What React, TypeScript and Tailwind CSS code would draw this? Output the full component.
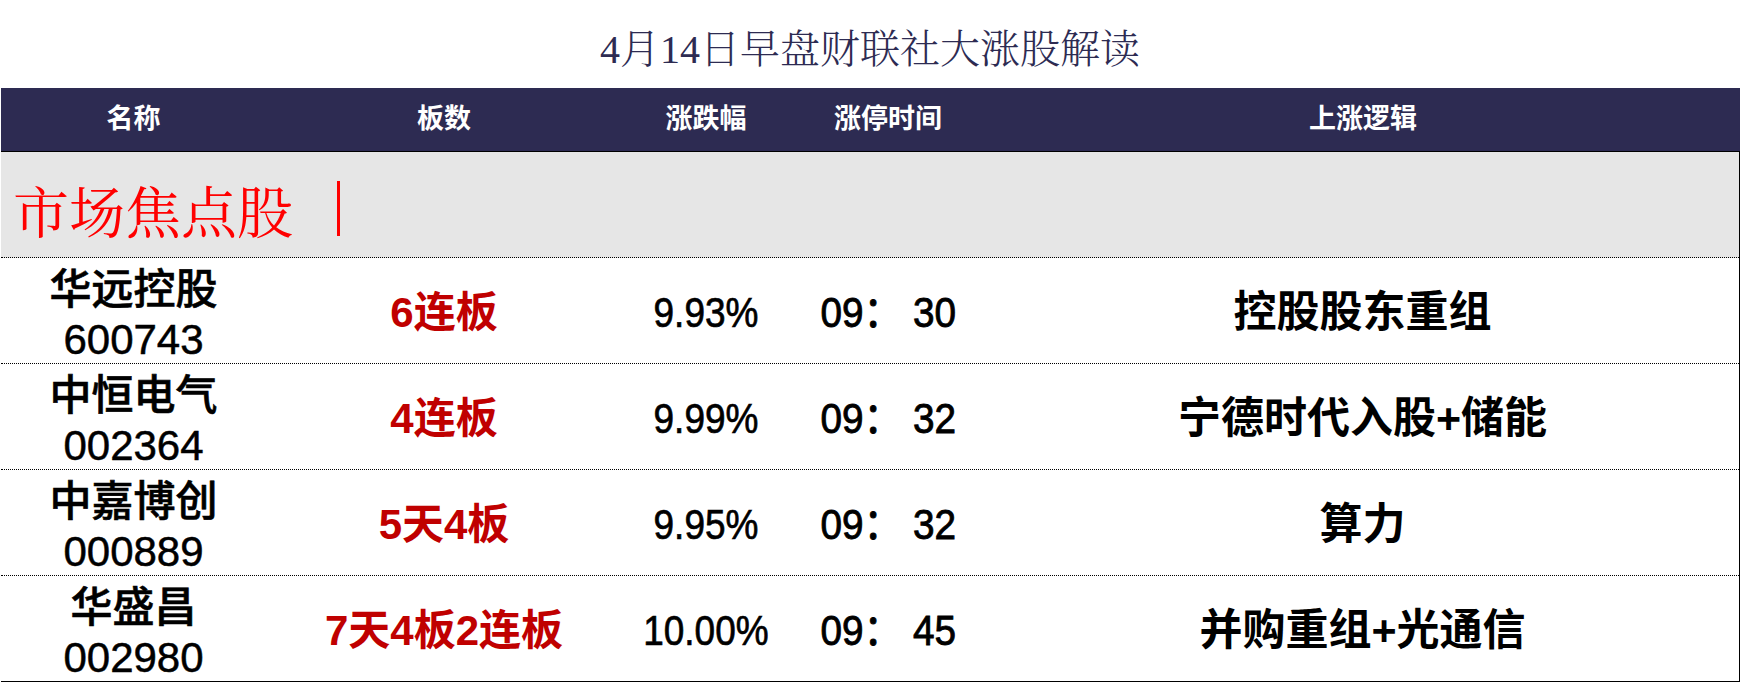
import React from 'react';

interface StockRow {
  name: string;
  code: string;
  board: string;
  change: string;
  time: string;
  reason: string;
}

const rows: StockRow[] = [
  { name: '华远控股', code: '600743', board: '6连板', change: '9.93%', time: '09： 30', reason: '控股股东重组' },
  { name: '中恒电气', code: '002364', board: '4连板', change: '9.99%', time: '09： 32', reason: '宁德时代入股+储能' },
  { name: '中嘉博创', code: '000889', board: '5天4板', change: '9.95%', time: '09： 32', reason: '算力' },
  { name: '华盛昌', code: '002980', board: '7天4板2连板', change: '10.00%', time: '09： 45', reason: '并购重组+光通信' },
];

const cols = 'grid grid-cols-[265px_356px_168px_196px_1fr]';
const sans = "font-['Liberation_Sans','Noto_Sans_CJK_SC',sans-serif]";

export default function App() {
  return (
    <div className={`w-[1740px] h-[682px] bg-white overflow-hidden ${sans}`}>
      <div className="h-[88px] flex items-center justify-center pt-[12px]">
        <h1 className="text-[40px] leading-none font-light text-[#2d2b52] font-['Liberation_Serif','Noto_Serif_CJK_SC','Noto_Sans_CJK_SC',serif]">
          4月14日早盘财联社大涨股解读
        </h1>
      </div>

      <div className="ml-px">
        <div className={`${cols} h-[64px] bg-[#2d2b52] border-b border-black text-white text-[27px] font-bold items-center text-center`}>
          <div>名称</div>
          <div>板数</div>
          <div>涨跌幅</div>
          <div>涨停时间</div>
          <div>上涨逻辑</div>
        </div>

        <div className="border-r border-black">
          <div className="h-[106px] bg-[#e6e6e6] border-b border-dotted border-black flex items-center pl-[12px] pt-[8px]">
            <span className="text-[56px] leading-none text-[#ff0000] font-['Noto_Serif_CJK_SC','Noto_Sans_CJK_SC',serif]">
              市场焦点股
            </span>
            <span className="ml-[44px] w-[3px] h-[55px] bg-[#ff0000]" />
          </div>

          {rows.map((r, i) => (
            <div
              key={r.code}
              className={`${cols} h-[106px] items-center text-center text-black border-b ${
                i === rows.length - 1 ? 'border-solid border-black' : 'border-dotted border-black'
              }`}
            >
              <div className="flex flex-col items-center pt-[7px]">
                <span className="text-[42px] leading-[50px] font-medium [-webkit-text-stroke:0.6px_black]">{r.name}</span>
                <span className="text-[42px] leading-[50px] [-webkit-text-stroke:0.5px_black]">{r.code}</span>
              </div>
              <div className="text-[42px] font-bold text-[#c00000] pt-[2px]">{r.board}</div>
              <div className="pt-[2px]">
                <span className="inline-block text-[43px] scale-x-[0.86] whitespace-nowrap [-webkit-text-stroke:0.7px_black]">
                  {r.change}
                </span>
              </div>
              <div className="pt-[2px]">
                <span className="inline-block text-[43px] scale-x-[0.9] whitespace-nowrap [-webkit-text-stroke:0.9px_black]">
                  {r.time}
                </span>
              </div>
              <div className="text-[43px] font-bold pt-[2px]">{r.reason}</div>
            </div>
          ))}
        </div>
      </div>
    </div>
  );
}
